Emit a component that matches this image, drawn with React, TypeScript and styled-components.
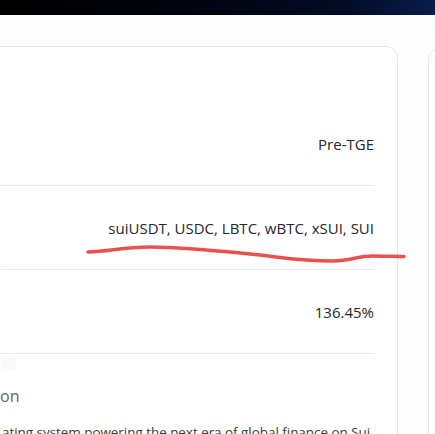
import React from "react";
import styled, { createGlobalStyle } from "styled-components";

const Global = createGlobalStyle`
  html, body { margin: 0; padding: 0; background: #fdfdfe; overflow: hidden; }
  body { font-family: "Open Sans", "Noto Sans", sans-serif; width: 435px; height: 434px; }
`;

const TopBar = styled.div`
  height: 15px;
  background: linear-gradient(90deg, #000000 0%, #01040f 45%, #030c26 80%, #0a1c4a 100%);
`;

const Stage = styled.div`
  position: relative;
  display: flex;
  gap: 30px;
  padding-top: 31px;
`;

const Card = styled.div`
  flex: none;
  width: 422px;
  margin-left: -24px;
  padding: 0 23px 0 24px;
  background: #ffffff;
  border: 1px solid #e6e6e6;
  border-radius: 12px;
  box-sizing: border-box;
  height: 600px;
`;

const SideCard = styled.div`
  flex: none;
  width: 300px;
  margin-top: 2px;
  background: #ffffff;
  border: 1px solid #e6e6e6;
  border-radius: 12px;
  height: 600px;
`;

const Spacer = styled.div`
  height: 55px;
`;

const Row = styled.div<{ $divider?: boolean }>`
  height: 83px;
  display: flex;
  align-items: center;
  justify-content: flex-end;
  border-bottom: ${(p) => (p.$divider ? "1px solid #e8e8e8" : "none")};
  font-size: 15px;
  color: #262626;
`;

const Ghost = styled.div`
  width: 15px;
  height: 11px;
  margin-top: 4px;
  background: #fafafa;
`;

const Label = styled.div`
  margin-top: 17px;
  font-size: 16px;
  line-height: 20px;
  color: #666666;
  margin-left: -1px;
`;

const Paragraph = styled.div`
  margin-top: 16px;
  font-size: 13.4px;
  line-height: 20px;
  color: #3a3a3a;
  white-space: nowrap;
  margin-left: 1px;
`;

const Scribble = styled.svg`
  position: absolute;
  left: 0;
  top: 0;
  pointer-events: none;
`;

export default function App() {
  return (
    <>
      <Global />
      <TopBar />
      <Stage>
        <Card>
          <Spacer />
          <Row $divider>Pre-TGE</Row>
          <Row $divider>suiUSDT, USDC, LBTC, wBTC, xSUI, SUI</Row>
          <Row $divider>136.45%</Row>
          <Ghost />
          <Label>on</Label>
          <Paragraph>ating system powering the next era of global finance on Sui</Paragraph>
        </Card>
        <SideCard />
        <Scribble width="435" height="300" viewBox="0 0 435 300" style={{ top: -15 }}>
          <path
            d="M88 252 C 110 251, 125 247, 150 247 C 180 247, 210 250, 250 254 C 280 257, 300 261, 333 261 C 350 261, 358 256, 372 256 C 385 256, 395 256.5, 404 256.5"
            fill="none"
            stroke="#e9514f"
            strokeWidth="3.5"
            strokeLinecap="round"
          />
        </Scribble>
      </Stage>
    </>
  );
}
